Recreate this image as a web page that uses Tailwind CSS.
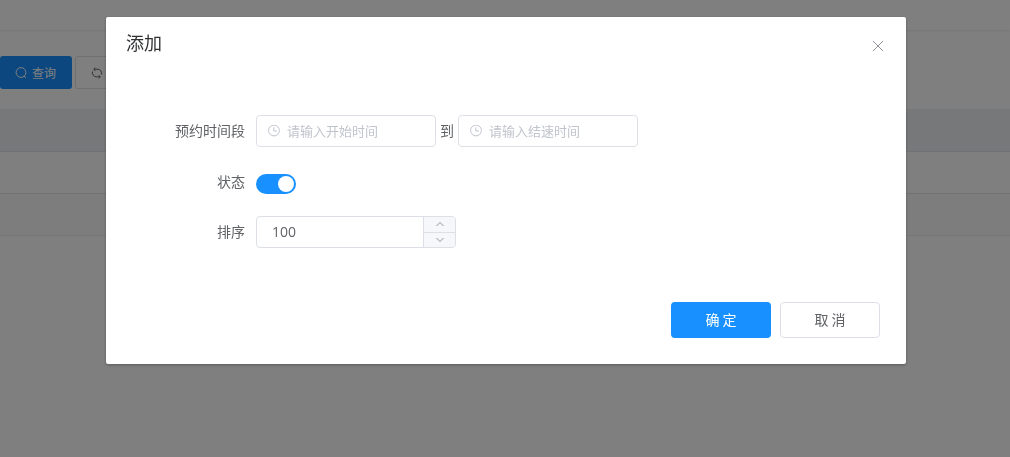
<!DOCTYPE html>
<html lang="zh-CN">
<head>
    <meta charset="UTF-8">
    <meta name="viewport" content="width=device-width, initial-scale=1.0">
    <title>预约时间段</title>
    <script src="https://cdn.jsdelivr.net/npm/@tailwindcss/browser@4"></script>
</head>
<body class="min-h-screen bg-white font-['Noto_Sans_CJK_SC',sans-serif] text-sm text-[#606266]">
    <!-- List page -->
    <div class="min-h-screen">
        <header class="h-[30px] shadow-[0_1px_2px_rgba(0,0,0,0.08)]"></header>

        <div class="flex gap-[3px] pt-[26px] pb-5">
            <button type="button" class="flex h-[33px] w-[72px] items-center gap-[5px] rounded-[3px] bg-[#1890ff] pl-[15px] text-xs text-white">
                <svg class="size-3" viewBox="0 0 12 12" fill="none" stroke="currentColor">
                    <circle cx="6" cy="5.5" r="4.9" />
                    <path d="M8.8 8.8 11 11" />
                </svg>
                查询
            </button>
            <button type="button" class="flex h-[33px] w-[72px] items-center gap-[5px] rounded-[3px] border border-[#dcdfe6] pl-[15px] text-xs">
                <svg class="size-3" viewBox="0 0 12 12" fill="none" stroke="currentColor">
                    <path d="M3.2 2.2H6.5A4 4 0 0 1 10.4 7.5M8.8 9.8H5.5A4 4 0 0 1 1.6 4.5" />
                    <path d="M4.2 .6 2.8 2.2 4.2 3.8M7.8 8.2 9.2 9.8 7.8 11.4" />
                </svg>
                重置
            </button>
        </div>

        <div>
            <div class="h-[43px] border-b border-[#dfe6ec] bg-[#eff1f4]"></div>
            <div class="h-[42px] border-b border-[#dfe3e8]"></div>
            <div class="h-[42px] border-b border-[#ebeef5] bg-[#fafafa]"></div>
        </div>
    </div>

    <!-- Add dialog -->
    <div class="fixed inset-0 overflow-auto bg-black/50 pt-[17px] pl-0.5">
        <div id="dialog" role="dialog" aria-labelledby="dialogTitle" class="mx-auto w-full max-w-[800px] rounded-xs bg-white shadow-[0_1px_3px_rgba(0,0,0,0.3)]">
            <div class="flex items-start justify-between px-5 pt-[13px]">
                <h2 id="dialogTitle" class="text-lg leading-6 text-[#303133]">添加</h2>
                <button type="button" id="closeDialog" aria-label="关闭" class="mt-2 flex size-4 items-center justify-center text-[#909399]">
                    <svg class="size-3" viewBox="0 0 12 12" fill="none" stroke="currentColor">
                        <path d="M1 1l10 10M11 1 1 11" />
                    </svg>
                </button>
            </div>

            <form class="pt-[61px] pr-[26px] pb-[26px]">
                <div class="flex flex-col gap-[18px]">
                    <div class="flex items-start">
                        <label for="startTime" class="w-[150px] shrink-0 pr-[11px] text-right leading-[30px]">预约时间段</label>
                        <div class="flex items-start gap-1">
                            <div class="flex h-8 w-[180px] items-center gap-[7px] rounded-sm border border-[#dcdfe6] pr-2.5 pl-[11px]">
                                <svg class="size-3 shrink-0 text-[#c0c4cc]" viewBox="0 0 12 12" fill="none" stroke="currentColor">
                                    <circle cx="6" cy="5.5" r="5.4" />
                                    <path d="M5.8 2.3v3.7h3.2" />
                                </svg>
                                <input type="text" id="startTime" placeholder="请输入开始时间" class="w-full min-w-0 text-[13px] outline-none placeholder:text-[#c0c4cc]">
                            </div>
                            <label for="endTime" class="leading-[30px]">到</label>
                            <div class="flex h-8 w-[180px] items-center gap-[7px] rounded-sm border border-[#dcdfe6] pr-2.5 pl-[11px]">
                                <svg class="size-3 shrink-0 text-[#c0c4cc]" viewBox="0 0 12 12" fill="none" stroke="currentColor">
                                    <circle cx="6" cy="5.5" r="5.4" />
                                    <path d="M5.8 2.3v3.7h3.2" />
                                </svg>
                                <input type="text" id="endTime" placeholder="请输入结速时间" class="w-full min-w-0 text-[13px] outline-none placeholder:text-[#c0c4cc]">
                            </div>
                        </div>
                    </div>

                    <div class="flex h-[33px] items-start">
                        <label for="status" class="w-[150px] shrink-0 pr-[11px] text-right leading-8">状态</label>
                        <input type="checkbox" id="status" role="switch" checked class="mt-[9px] h-5 w-10 appearance-none rounded-full bg-[#dcdfe6] p-0.5 before:block before:size-4 before:rounded-full before:bg-white checked:bg-[#1890ff] checked:before:ml-5">
                    </div>

                    <div class="flex items-start">
                        <label for="sort" class="w-[150px] shrink-0 pr-[11px] text-right leading-[30px]">排序</label>
                        <div class="flex h-8 w-[200px] overflow-hidden rounded-sm border border-[#dcdfe6]">
                            <input type="text" id="sort" inputmode="numeric" value="100" class="min-w-0 flex-1 pl-[15px] font-['Open_Sans',sans-serif] outline-none">
                            <div class="flex w-8 flex-col border-l border-[#dcdfe6] bg-[#f5f7fa] text-[#909399]">
                                <button type="button" id="increase" aria-label="增加" class="flex flex-1 items-center justify-center border-b border-[#dcdfe6]">
                                    <svg class="h-1.5 w-2.5" viewBox="0 0 10 6" fill="none" stroke="currentColor">
                                        <path d="M1.5 5 5 1.5 8.5 5" />
                                    </svg>
                                </button>
                                <button type="button" id="decrease" aria-label="减少" class="flex flex-1 items-center justify-center">
                                    <svg class="h-1.5 w-2.5" viewBox="0 0 10 6" fill="none" stroke="currentColor">
                                        <path d="M1.5 1 5 4.5 8.5 1" />
                                    </svg>
                                </button>
                            </div>
                        </div>
                    </div>
                </div>

                <div class="mt-[54px] flex justify-end gap-[9px]">
                    <button type="submit" class="h-9 w-[100px] rounded-sm bg-[#1890ff] pb-0.5 text-white">确 定</button>
                    <button type="button" id="cancel" class="h-9 w-[100px] rounded-sm border border-[#dcdfe6] bg-white pb-0.5">取 消</button>
                </div>
            </form>
        </div>
    </div>

    <script>
        const overlay = document.getElementById('dialog').parentElement;
        const sortInput = document.getElementById('sort');

        // Close dialog
        ['closeDialog', 'cancel'].forEach(id => {
            document.getElementById(id).addEventListener('click', () => {
                overlay.classList.add('hidden');
            });
        });

        // Number stepper
        document.getElementById('increase').addEventListener('click', () => {
            sortInput.value = Number(sortInput.value) + 1;
        });
        document.getElementById('decrease').addEventListener('click', () => {
            sortInput.value = Number(sortInput.value) - 1;
        });
    </script>
</body>
</html>
